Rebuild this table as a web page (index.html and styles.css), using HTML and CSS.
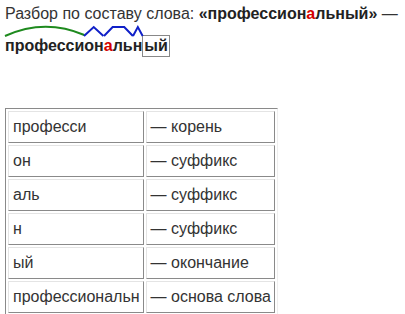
FILE: index.html
```html
<!DOCTYPE html>
<html lang="ru">
<head>
<meta charset="utf-8">
<link rel="stylesheet" href="styles.css">
</head>
<body>
<div class="page">
  <p class="title">Разбор по составу слова: <b>«профессион<span class="stress">а</span>льный»</b> —</p>
  <div class="word">
    <span class="m root">професси<svg class="mark" viewBox="0 0 100 10" preserveAspectRatio="none"><path d="M0,10 Q50,-8 100,9" /></svg></span><span class="m suf">он<svg class="mark" viewBox="0 0 100 10" preserveAspectRatio="none"><path d="M0,10 L50,1 L100,10" /></svg></span><span class="m suf"><span class="stress">а</span>ль<svg class="mark" viewBox="0 0 100 10" preserveAspectRatio="none"><path d="M0,10 L30,1 L70,1 L100,10" /></svg></span><span class="m suf">н<svg class="mark" viewBox="0 0 100 10" preserveAspectRatio="none"><path d="M0,10 L50,1 L100,10" /></svg></span><span class="ending">ый</span>
  </div>
  <table class="parts">
    <tr><td>професси</td><td>— корень</td></tr>
    <tr><td>он</td><td>— суффикс</td></tr>
    <tr><td>аль</td><td>— суффикс</td></tr>
    <tr><td>н</td><td>— суффикс</td></tr>
    <tr><td>ый</td><td>— окончание</td></tr>
    <tr><td>профессиональн</td><td>— основа слова</td></tr>
  </table>
</div>
</body>
</html>
```

FILE: styles.css
```css
html, body {
  margin: 0;
  padding: 0;
  background: #fff;
}
.page {
  padding: 0 5px;
  font-family: "Liberation Sans", Arial, sans-serif;
  font-size: 16px;
  color: #333;
}
.title {
  margin: 0;
  padding-top: 4px;
  line-height: 20px;
}
.title b {
  color: #222;
}
.stress {
  color: #d40000;
}
.word {
  margin-top: 11px;
  font-weight: bold;
  color: #222;
  line-height: 20px;
}
.m {
  position: relative;
  display: inline-block;
}
.mark {
  position: absolute;
  left: 0;
  top: -10px;
  width: 100%;
  height: 10px;
  overflow: visible;
}
.mark path {
  fill: none;
  stroke-width: 2;
  vector-effect: non-scaling-stroke;
}
.root .mark path {
  stroke: #1e8a1e;
}
.suf .mark path {
  stroke: #1020c8;
}
.ending {
  display: inline-block;
  border: 1px solid #888;
  padding: 0 1px;
  line-height: 20px;
}
.parts {
  margin-top: 51px;
  border-collapse: separate;
  border-spacing: 2px;
  border-top: 1px solid #8a8a8a;
  border-left: 1px solid #8a8a8a;
  border-right: 1px solid #eee;
  border-bottom: 1px solid #eee;
  font-size: 16px;
  color: #333;
}
.parts td {
  height: 30px;
  padding: 0 3px 0 4px;
  border-top: 1px solid #e4e4e4;
  border-left: 1px solid #e4e4e4;
  border-right: 1px solid #8a8a8a;
  border-bottom: 1px solid #8a8a8a;
}
```
